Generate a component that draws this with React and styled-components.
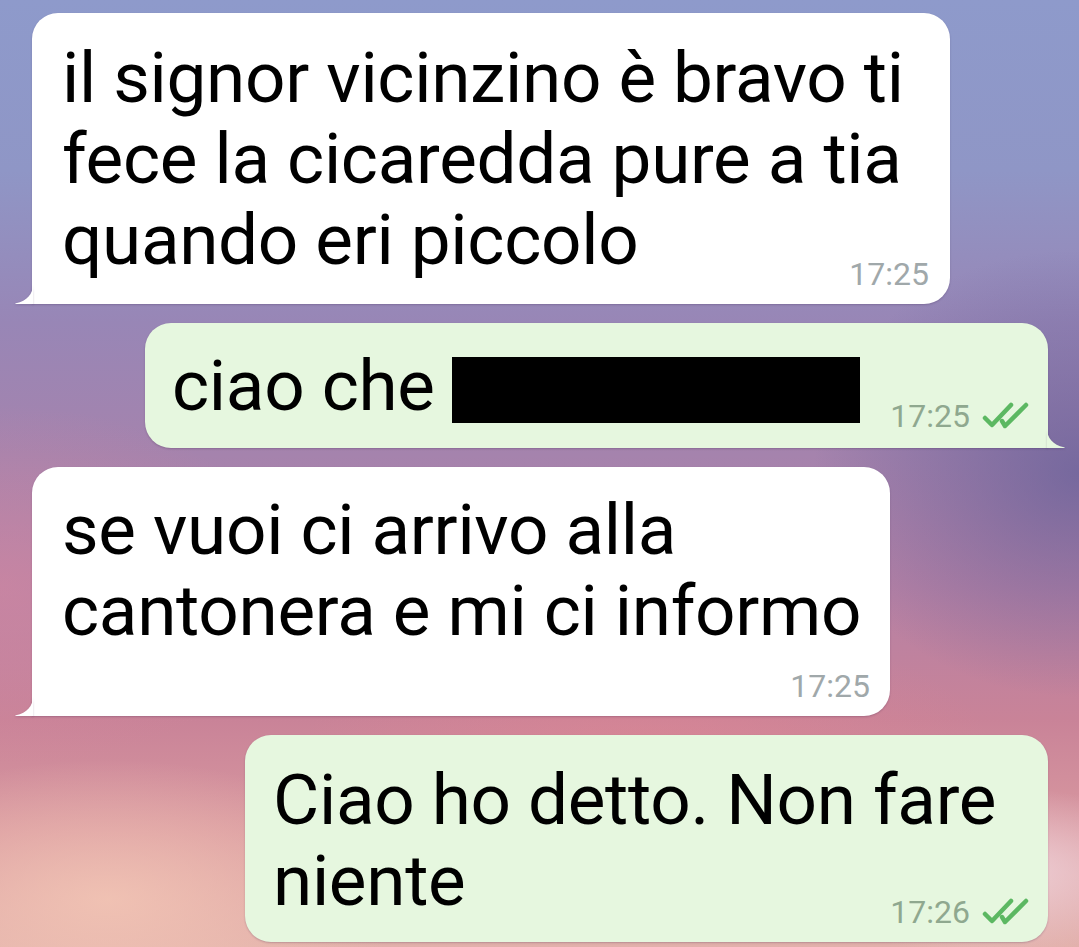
import React from "react";
import styled, { createGlobalStyle } from "styled-components";

const GlobalStyle = createGlobalStyle`
  html, body {
    margin: 0;
    padding: 0;
    height: 947px;
    overflow: hidden;
  }

  body {
    font-family: Roboto, "Noto Sans", "Liberation Sans", sans-serif;
  }
`;

const Screen = styled.div`
  display: flex;
  flex-direction: column;
  gap: 19px;
  box-sizing: border-box;
  width: 1079px;
  height: 947px;
  padding-top: 13px;
  overflow: hidden;

  background:
    radial-gradient(ellipse 300px 120px at 92% 92%, rgba(246, 226, 234, 0.75), rgba(246, 226, 234, 0) 70%),
    radial-gradient(ellipse 420px 200px at 10% 95%, rgba(244, 200, 182, 0.8), rgba(244, 200, 182, 0) 70%),
    radial-gradient(ellipse 380px 320px at 100% 50%, rgba(92, 90, 150, 0.65), rgba(92, 90, 150, 0) 70%),
    radial-gradient(ellipse 420px 260px at 0% 62%, rgba(214, 136, 160, 0.55), rgba(214, 136, 160, 0) 70%),
    radial-gradient(ellipse 500px 200px at 60% 80%, rgba(226, 134, 146, 0.5), rgba(226, 134, 146, 0) 70%),
    linear-gradient(
      180deg,
      #8e9acb 0%,
      #8f96c6 18%,
      #9886b6 34%,
      #a583ad 48%,
      #b581a5 62%,
      #c98398 76%,
      #d999a0 88%,
      #e2b0ab 100%
    );
`;

const Bubble = styled.div`
  position: relative;
  display: flex;
  flex-direction: ${(p) => (p.$row ? "row" : "column")};
  justify-content: ${(p) => (p.$row ? "space-between" : "flex-start")};
  box-sizing: border-box;
  width: ${(p) => p.$width}px;
  padding: ${(p) => p.$pad};
  align-self: ${(p) => (p.$out ? "flex-end" : "flex-start")};
  margin: ${(p) => (p.$out ? "0 31px 0 0" : "0 0 0 32px")};
  background: ${(p) => (p.$out ? "#e6f7df" : "#ffffff")};
  border-radius: 26px;
  border-bottom-left-radius: ${(p) => (p.$tail === "left" ? "0" : "26px")};
  border-bottom-right-radius: ${(p) => (p.$tail === "right" ? "0" : "26px")};
  box-shadow: 0 1px 2px rgba(40, 20, 60, 0.22);
`;

const Tail = styled.svg`
  position: absolute;
  bottom: 0;
  width: 18px;
  height: 20px;
  ${(p) => (p.$side === "left" ? "left: -17px;" : "right: -17px;")}
  filter: drop-shadow(0 1px 1px rgba(40, 20, 60, 0.2));
`;

const Text = styled.div`
  font-size: 71px;
  line-height: 81px;
  color: #000;
  white-space: nowrap;
  letter-spacing: -0.3px;
`;

const Redacted = styled.span`
  display: inline-block;
  width: 408px;
  height: 66px;
  background: #000;
  vertical-align: -13px;
`;

const Meta = styled.div`
  display: flex;
  align-items: center;
  align-self: flex-end;
  height: 36px;
  margin-top: ${(p) => p.$top || 0}px;
  margin-bottom: ${(p) => p.$bottom || 0}px;
  padding-right: ${(p) => p.$right || 0}px;
`;

const Time = styled.span`
  font-size: 32px;
  line-height: 36px;
  color: ${(p) => (p.$out ? "#8fa88f" : "#a0a8aa")};
`;

const Ticks = styled.svg`
  width: 48px;
  height: 28px;
  margin-left: 12px;
  margin-top: -2px;
`;

const BubbleTail = ({ side, color }) => (
  <Tail $side={side} viewBox="0 0 18 20">
    {side === "left" ? (
      <path d="M18 0 C18 10 12 17 1 19.2 C0 19.5 0 20 1 20 L18 20 Z" fill={color} />
    ) : (
      <path d="M0 0 C0 10 6 17 17 19.2 C18 19.5 18 20 17 20 L0 20 Z" fill={color} />
    )}
  </Tail>
);

const DoubleTick = () => (
  <Ticks viewBox="0 0 48 28">
    <g fill="none" stroke="#5cb862" strokeWidth="4.5" strokeLinecap="round" strokeLinejoin="round">
      <path d="M3 17 L10 24 L29 4" />
      <path d="M20 20 L23 25 L44 4" />
    </g>
  </Ticks>
);

const App = () => {
  return (
    <>
      <GlobalStyle />
      <Screen>
        <Bubble $width={918} $pad="24px 0 12px 30px" $tail="left">
          <Text>
            il signor vicinzino è bravo ti
            <br />
            fece la cicaredda pure a tia
            <br />
            quando eri piccolo
          </Text>
          <Meta $top={-24} $right={21}>
            <Time>17:25</Time>
          </Meta>
          <BubbleTail side="left" color="#ffffff" />
        </Bubble>

        <Bubble $width={903} $pad="22px 0 22px 27px" $out $row $tail="right">
          <Text>
            ciao che <Redacted />
          </Text>
          <Meta $bottom={-8} $right={18}>
            <Time $out>17:25</Time>
            <DoubleTick />
          </Meta>
          <BubbleTail side="right" color="#e6f7df" />
        </Bubble>

        <Bubble $width={858} $pad="22px 0 12px 30px" $tail="left">
          <Text>
            se vuoi ci arrivo alla
            <br />
            cantonera e mi ci informo
          </Text>
          <Meta $top={17} $right={20}>
            <Time>17:25</Time>
          </Meta>
          <BubbleTail side="left" color="#ffffff" />
        </Bubble>

        <Bubble $width={803} $pad="24px 0 12px 28px" $out>
          <Text>
            Ciao ho detto. Non fare
            <br />
            niente
          </Text>
          <Meta $top={-27} $right={18}>
            <Time $out>17:26</Time>
            <DoubleTick />
          </Meta>
        </Bubble>
      </Screen>
    </>
  );
};

export default App;
